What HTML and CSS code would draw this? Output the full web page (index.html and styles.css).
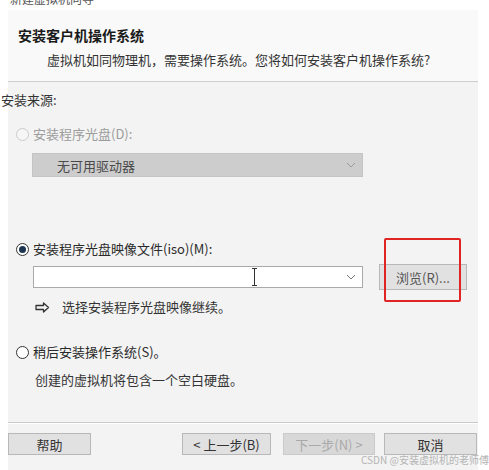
FILE: index.html
```html
<!DOCTYPE html>
<html lang="zh-CN">

<head>
  <meta charset="UTF-8">
  <meta name="viewport" content="width=device-width, initial-scale=1.0">
  <link rel="stylesheet" href="styles.css">
  <title>新建虚拟机向导</title>
</head>

<body>
  <div class="cut"><span>新建虚拟机向导</span></div>

  <div class="dialog">
    <div class="header">
      <h1>安装客户机操作系统</h1>
      <p class="sub">虚拟机如同物理机，需要操作系统。您将如何安装客户机操作系统?</p>
    </div>

    <div class="content">
      <div class="source">安装来源:</div>

      <label class="option disabled first">
        <span class="radio"></span>安装程序光盘(D):
      </label>
      <div class="select dim">
        <span>无可用驱动器</span>
        <svg width="10" height="6" viewBox="0 0 10 6"><path d="M1 1l4 4 4-4" fill="none" stroke="#9a9a9a" stroke-width="1"/></svg>
      </div>

      <label class="option second">
        <span class="radio on"></span>安装程序光盘映像文件(iso)(M):
      </label>
      <div class="iso-row">
        <div class="select field">
          <span></span>
          <svg width="10" height="6" viewBox="0 0 10 6"><path d="M1 1l4 4 4-4" fill="none" stroke="#777" stroke-width="1"/></svg>
          <svg class="ibeam" width="5" height="18" viewBox="0 0 5 18"><path d="M0 .5h5M2.5 .5v17M0 17.5h5" fill="none" stroke="#333" stroke-width="1"/></svg>
        </div>
        <div class="browse-wrap">
          <button type="button" class="btn browse">浏览(R)...</button>
          <div class="mark"></div>
        </div>
      </div>
      <div class="hint">
        <svg class="arrow" width="15" height="11" viewBox="0 0 15 11"><path d="M1 3.5h7.5V1l5 4.5-5 4.5V7.5H1z" fill="none" stroke="#333" stroke-width="1.3" stroke-linejoin="round"/></svg>
        选择安装程序光盘映像继续。
      </div>

      <label class="option third">
        <span class="radio"></span>稍后安装操作系统(S)。
      </label>
      <div class="desc">创建的虚拟机将包含一个空白硬盘。</div>
    </div>

    <div class="footer">
      <button type="button" class="btn help">帮助</button>
      <button type="button" class="btn back">&lt; 上一步(B)</button>
      <button type="button" class="btn next" disabled>下一步(N) &gt;</button>
      <button type="button" class="btn cancel">取消</button>
    </div>
  </div>

  <div class="watermark">CSDN @安装虚拟机的老师傅</div>
</body>

</html>
```

FILE: styles.css
```css
* {
  margin: 0;
  padding: 0;
  box-sizing: border-box;
}

body {
  font-family: "Noto Sans CJK SC", "Noto Sans", sans-serif;
  font-size: 13px;
  color: #2a2a2a;
  background: #fff;
  width: 489px;
  height: 470px;
  overflow: hidden;
  position: relative;
}

.cut {
  height: 10px;
  overflow: hidden;
  padding-left: 10px;
}

.cut span {
  display: block;
  font-size: 12px;
  line-height: 12px;
  margin-top: -7px;
  color: #555;
}

.dialog {
  margin-left: 8px;
  width: 470px;
  height: 460px;
  background: #f3f3f3;
}

.header {
  height: 72px;
  background: #f9f9f9;
  border-bottom: 1px solid #cdcdcd;
  padding-top: 15px;
}

h1 {
  font-size: 14px;
  line-height: 20px;
  font-weight: bold;
  color: #1a1a1a;
  padding-left: 10px;
}

.sub {
  line-height: 20px;
  margin-top: 5px;
  padding-left: 39px;
  color: #333;
}

.content {
  padding-top: 8px;
  height: 341px;
  border-bottom: 1px solid #c9c9c9;
  box-shadow: 0 1px 0 #fff;
}

.source {
  line-height: 20px;
  margin-left: -7px;
  color: #333;
}

.option {
  display: flex;
  align-items: center;
  line-height: 20px;
  padding-left: 8px;
}

.option.first {
  margin-top: 14px;
}

.option.second {
  margin-top: 62px;
}

.option.third {
  margin-top: 25px;
}

.disabled {
  color: #9c9c9c;
}

.radio {
  width: 13px;
  height: 13px;
  border-radius: 50%;
  border: 1px solid #333;
  background: #fff;
  margin-right: 4px;
  position: relative;
}

.disabled .radio {
  border-color: #cbcbcb;
  background: #f6f6f6;
}

.radio.on::after {
  content: "";
  position: absolute;
  left: 2px;
  top: 2px;
  width: 7px;
  height: 7px;
  border-radius: 50%;
  background: #1d3550;
}

.select {
  display: flex;
  align-items: center;
  justify-content: space-between;
  padding: 0 6px 0 24px;
}

.select.dim {
  margin: 9px 0 0 24px;
  width: 331px;
  height: 24px;
  background: #cdcdcd;
  border: 1px solid #c4c4c4;
  color: #4a4a4a;
}

.iso-row {
  display: flex;
  align-items: center;
  margin: 5px 0 0 25px;
  height: 26px;
}

.select.field {
  width: 330px;
  height: 22px;
  background: #fff;
  border: 1px solid #a9a9a9;
  position: relative;
}

.ibeam {
  position: absolute;
  left: 218px;
  top: 1px;
}

.browse-wrap {
  position: relative;
  margin-left: 16px;
}

.btn {
  font-family: inherit;
  font-size: 13px;
  height: 22px;
  background: #e1e1e1;
  border: 1px solid #b8b8b8;
  color: #333;
}

.btn.browse {
  width: 88px;
  height: 26px;
  color: #555;
}

.mark {
  position: absolute;
  left: 5px;
  top: -26px;
  width: 77px;
  height: 64px;
  border: 2px solid #e02424;
  border-radius: 2px;
}

.hint {
  display: flex;
  align-items: center;
  line-height: 20px;
  margin-top: 7px;
  padding-left: 27px;
  color: #333;
}

.arrow {
  margin-right: 12px;
}

.desc {
  line-height: 20px;
  margin-top: 8px;
  padding-left: 27px;
  color: #333;
}

.footer {
  display: flex;
  padding-top: 10px;
}

.help {
  width: 83px;
}

.back {
  width: 89px;
  margin-left: 91px;
}

.next {
  width: 92px;
  margin-left: 12px;
  background: #d8d8d8;
  border-color: #cacaca;
  color: #a9a9a9;
}

.cancel {
  width: 93px;
  margin-left: 9px;
}

.watermark {
  position: absolute;
  left: 361px;
  top: 453px;
  font-size: 10px;
  line-height: 14px;
  color: #b4b4b4;
  white-space: nowrap;
}
```
